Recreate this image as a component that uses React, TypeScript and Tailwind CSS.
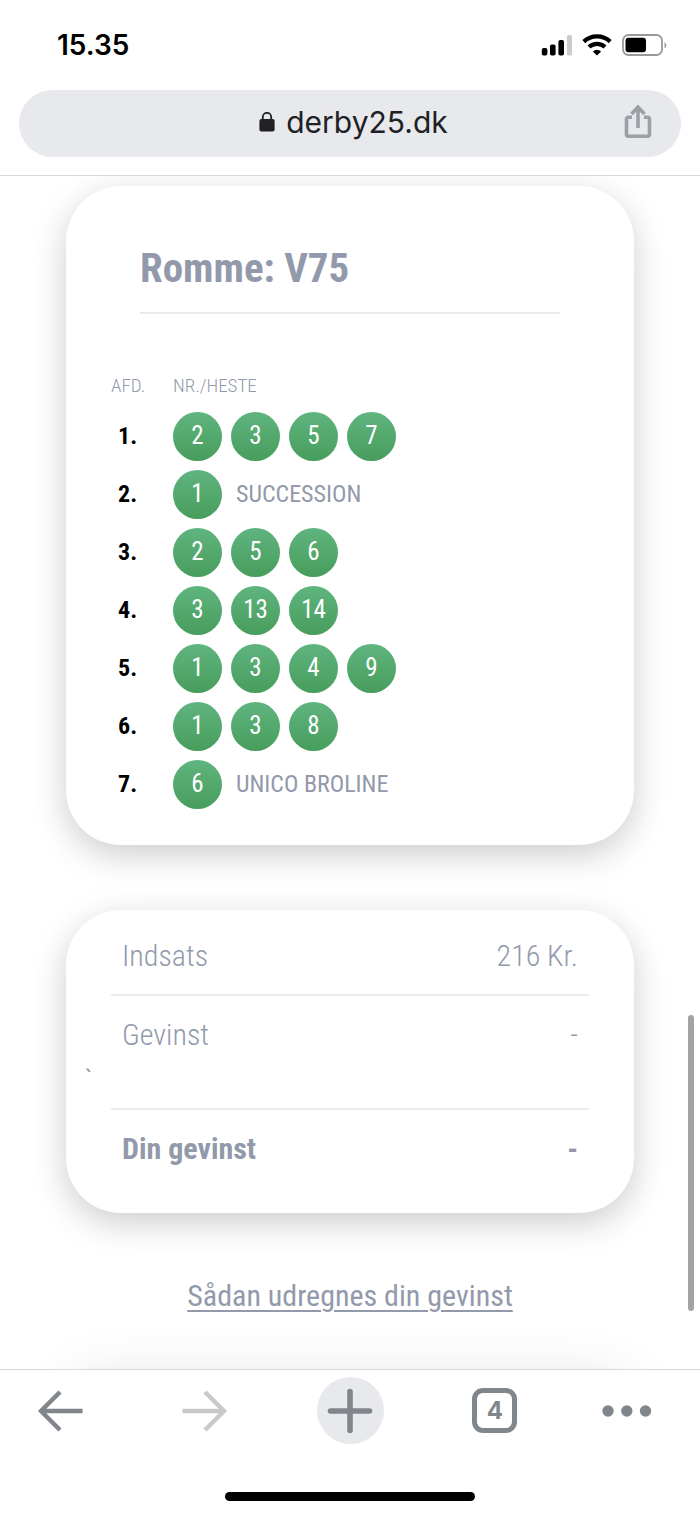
import type { ReactNode } from 'react'

interface Leg {
  id: number
  picks: number[]
  horse?: string
}

const LEGS: Leg[] = [
  { id: 1, picks: [2, 3, 5, 7] },
  { id: 2, picks: [1], horse: 'SUCCESSION' },
  { id: 3, picks: [2, 5, 6] },
  { id: 4, picks: [3, 13, 14] },
  { id: 5, picks: [1, 3, 4, 9] },
  { id: 6, picks: [1, 3, 8] },
  { id: 7, picks: [6], horse: 'UNICO BROLINE' },
]

function StatusBar() {
  return (
    <div className="flex h-[90px] items-center justify-between pr-[33px] pl-[57px]">
      <time className="text-[28px] leading-8 font-semibold text-black">15.35</time>
      <div className="flex items-center gap-[10px]">
        <svg width="31" height="22" viewBox="0 0 31 22" aria-hidden="true">
          <rect x="0.8" y="14" width="5.6" height="7.5" rx="1.8" />
          <rect x="9" y="10.5" width="5.6" height="11" rx="1.8" />
          <rect x="17.4" y="6" width="5.6" height="15.5" rx="1.8" />
          <rect x="25.9" y="1" width="5.1" height="20.5" rx="1.5" fill="#ccc" />
        </svg>
        <svg width="30" height="22" viewBox="0 0 30 22" aria-hidden="true">
          <g fill="none" stroke="#000" strokeWidth="4.2">
            <path d="M1.8 7.6a19.3 19.3 0 0 1 26.4 0" />
            <path d="M7 13a11.7 11.7 0 0 1 16 0" />
          </g>
          <path d="M15 21.5 10.9 17.4a6 6 0 0 1 8.2 0Z" />
        </svg>
        <svg width="45" height="22" viewBox="0 0 45 22" aria-hidden="true">
          <rect x="1" y="1" width="39" height="20" rx="5.5" fill="none" stroke="#999" strokeWidth="1.8" />
          <rect x="3.5" y="3.8" width="20.5" height="14.4" rx="3" />
          <path d="M42.5 8.2c2.4.8 2.4 5.2 0 6Z" fill="#999" />
        </svg>
      </div>
    </div>
  )
}

function AddressBar() {
  return (
    <div className="mx-[19px] flex h-[67px] items-center rounded-full bg-[#e8e9ed] pr-[27px] pl-[34px]">
      <div className="w-8" />
      <div className="flex flex-1 items-center justify-center gap-[11px] pb-1 text-[#202124]">
        <svg width="16" height="20" viewBox="0 0 16 20" aria-hidden="true">
          <path d="M3.8 8V5a4.2 4.2 0 0 1 8.4 0v3" fill="none" stroke="currentColor" strokeWidth="1.8" />
          <rect x="0.4" y="7" width="15.2" height="12.6" rx="2" fill="currentColor" />
        </svg>
        <span className="text-[30px] leading-10">derby25.dk</span>
      </div>
      <button type="button" aria-label="Del" className="flex w-8 justify-center pb-1.5 text-[#9aa0a6]">
        <svg width="28" height="34" viewBox="0 0 28 34" fill="none" stroke="currentColor" strokeWidth="3.6">
          <path d="M8 13.2H4.5a2 2 0 0 0-2 2v15a2 2 0 0 0 2 2h19a2 2 0 0 0 2-2v-15a2 2 0 0 0-2-2H20" />
          <path d="M14 24V4M7.5 10 14 3.2 20.5 10" />
        </svg>
      </button>
    </div>
  )
}

function Card({ children, className }: { children?: ReactNode; className: string }) {
  return (
    <section className={`mx-[66px] rounded-[55px] bg-white ${className}`}>
      {children}
    </section>
  )
}

function Pick({ value }: { value: number }) {
  return (
    <span className="flex size-[49px] items-center justify-center rounded-full bg-linear-to-b from-[#60b47f] to-[#479d5c] text-[25px] leading-7 text-white">
      {value}
    </span>
  )
}

function Coupon() {
  return (
    <Card className="pt-[57px] pb-8 shadow-[0_10px_34px_rgba(0,0,0,0.2)]">
      <h1 className="mx-[74px] border-b-2 border-[#ebebec] pb-[19px] text-[41px] leading-[50px] font-bold">Romme: V75</h1>
      <table className="mt-14 ml-[45px] text-left">
        <thead>
          <tr className="h-[37px] align-top text-[19px] leading-8 font-light">
            <th className="w-[62px] font-light">AFD.</th>
            <th className="font-light">NR./HESTE</th>
          </tr>
        </thead>
        <tbody>
          {LEGS.map((leg) => (
            <tr key={leg.id} className="h-[58px]">
              <th className="pl-[7px] text-[24px] leading-7 font-bold text-black">{leg.id}.</th>
              <td>
                <div className="flex items-center gap-[9px]">
                  {leg.picks.map((p) => (
                    <Pick key={p} value={p} />
                  ))}
                  {leg.horse && <span className="pl-[5px] text-[24px] leading-7">{leg.horse}</span>}
                </div>
              </td>
            </tr>
          ))}
        </tbody>
      </table>
    </Card>
  )
}

function SummaryRow({ label, value, className }: { label: string; value: string; className: string }) {
  return (
    <div className={`mx-[45px] flex justify-between px-[11px] text-[30px] leading-9 ${className}`}>
      <span>{label}</span>
      <span>{value}</span>
    </div>
  )
}

function Summary() {
  return (
    <Card className="mt-[65px] pt-7 pb-[46px] shadow-[0_10px_34px_rgba(0,0,0,0.2)]">
      <SummaryRow label="Indsats" value="216 Kr." className="border-b-2 border-[#ebebec] pb-5 font-light" />
      <SummaryRow label="Gevinst" value="-" className="pt-[21px] font-light" />
      <p className="pt-3 pl-[19px] text-[24px] leading-7">`</p>
      <hr className="mx-[45px] mt-[15px] border-t-2 border-[#ebebec]" />
      <SummaryRow label="Din gevinst" value="-" className="pt-[21px] font-bold" />
    </Card>
  )
}

function Toolbar() {
  return (
    <footer className="border-t border-[#d6d8da] bg-white pb-[14px] text-[#80868b]">
      <nav className="flex h-[81px] items-center justify-between pr-[48px] pl-[37px]">
        <button type="button" aria-label="Tilbage">
          <svg width="46" height="42" viewBox="0 0 46 42" fill="none" stroke="currentColor" strokeWidth="4.4">
            <path d="M45.5 21H4M23 2 4 21l19 19" />
          </svg>
        </button>
        <button type="button" aria-label="Frem" disabled className="ml-[10px] text-[#c8c9ca]">
          <svg width="46" height="42" viewBox="0 0 46 42" fill="none" stroke="currentColor" strokeWidth="4.4">
            <path d="M.5 21H42M23 2l19 19-19 19" />
          </svg>
        </button>
        <button type="button" aria-label="Ny fane" className="flex size-[67px] items-center justify-center rounded-full bg-[#e8e9ed]">
          <svg width="46" height="46" viewBox="0 0 46 46" stroke="currentColor" strokeWidth="5.6" strokeLinecap="round">
            <path d="M23 3.5v39M3.5 23h39" />
          </svg>
        </button>
        <button
          type="button"
          aria-label="Faner"
          className="flex size-[45px] items-center justify-center rounded-[11px] border-[5px] border-[#80868b] text-[24px] leading-7 font-bold"
        >
          4
        </button>
        <button type="button" aria-label="Mere" className="-ml-1">
          <svg width="50" height="12" viewBox="0 0 50 12" fill="currentColor">
            <circle cx="6" cy="6" r="5.7" />
            <circle cx="24.8" cy="6" r="5.7" />
            <circle cx="43.5" cy="6" r="5.7" />
          </svg>
        </button>
      </nav>
      <div className="mx-auto mt-[41px] h-[9px] w-[250px] rounded-full bg-black" />
    </footer>
  )
}

export default function App() {
  return (
    <div className="flex min-h-screen flex-col bg-white font-['Inter',sans-serif]">
      <header className="border-b border-[#d6d8da] pb-[18px]">
        <StatusBar />
        <AddressBar />
      </header>
      <main className="relative flex-1 overflow-hidden pt-[10px] font-['Roboto_Condensed','Liberation_Sans_Narrow',Roboto,sans-serif] text-[#9299ab]">
        <Coupon />
        <Summary />
        <p className="mt-[65px] text-center text-[30px] leading-9">
          <a href="#gevinst" className="underline decoration-2 underline-offset-4">
            Sådan udregnes din gevinst
          </a>
        </p>
        {/* next card, only its shadow reaches into view */}
        <Card className="mt-[60px] -mb-[100px] h-20 shadow-[0_6px_60px_rgba(0,0,0,0.12)]" />
        <div className="absolute top-[839px] right-[6px] h-[296px] w-[6px] rounded-full bg-[#a3a3a3]" />
      </main>
      <Toolbar />
    </div>
  )
}
